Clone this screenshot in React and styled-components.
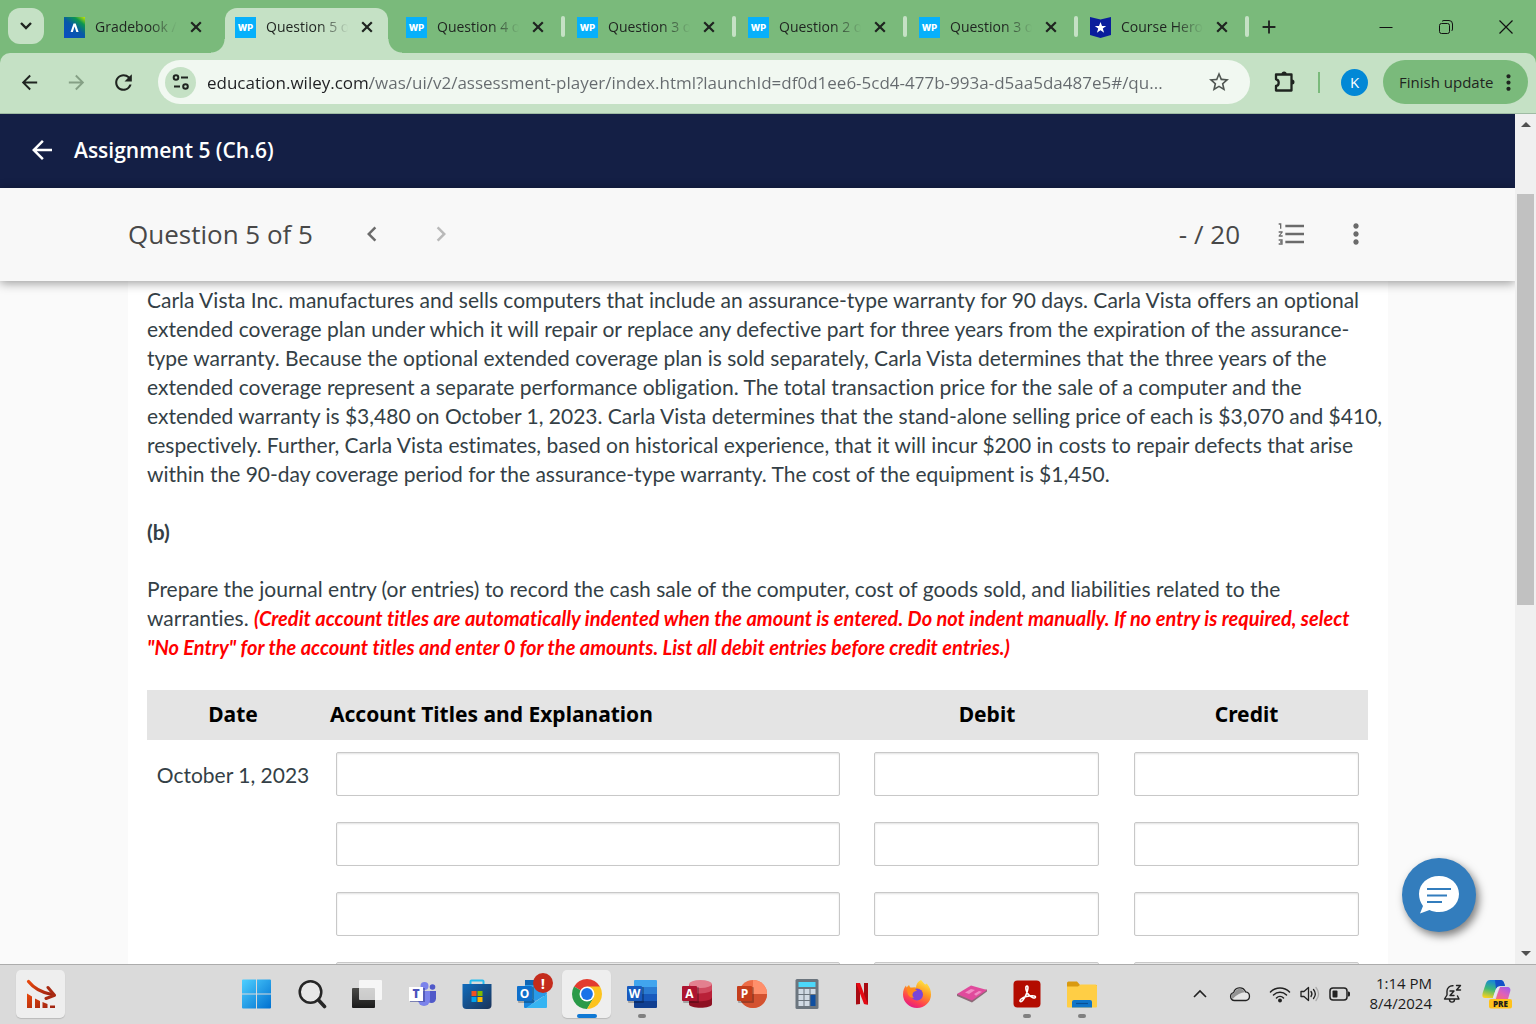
import React from "react";
import styled, { createGlobalStyle, css } from "styled-components";
import {
  MdArrowBack,
  MdArrowForward,
  MdChevronLeft,
  MdChevronRight,
  MdAdd,
  MdMoreVert,
  MdRefresh,
  MdStarBorder,
  MdFormatListNumbered,
} from "react-icons/md";

const green = "#7aba7b";
const mint = "#c5e1c5";
const ink = "#1f2420";
const ui = `"Open Sans", "Noto Sans", sans-serif`;

const GlobalStyle = createGlobalStyle`
  * { box-sizing: border-box; }
  body { margin: 0; overflow: hidden; font-family: ${ui}; }
  button { border: 0; padding: 0; background: none; font: inherit; color: inherit; cursor: pointer; }
  svg { display: block; flex: none; }
`;

const Screen = styled.div`
  display: flex;
  flex-direction: column;
  height: 100vh;
  background: ${green};
`;

/* ---------- tab strip ---------- */

const TabStrip = styled.header`
  display: flex;
  align-items: stretch;
  height: 53px;
  padding: 8px 0 0 8px;
  color: ${ink};
`;

const TabSearch = styled.button`
  display: grid;
  place-items: center;
  width: 36px;
  height: 36px;
  margin-right: 10px;
  border-radius: 12px;
  background: ${mint};
`;

const TabList = styled.ul`
  display: flex;
  margin: 0;
  padding: 0;
  list-style: none;
`;

const TabItem = styled.li`
  display: flex;
  width: 171px;
`;

const foot = css`
  content: "";
  position: absolute;
  bottom: 0;
  width: 14px;
  height: 14px;
`;

const TabBody = styled.div`
  position: relative;
  display: flex;
  align-items: center;
  gap: 10px;
  width: 163px;
  padding: 0 14px 7px 10px;
  border-radius: 12px 12px 0 0;
  background: ${(p) => (p.$active ? mint : "transparent")};
  ${(p) =>
    p.$active &&
    css`
      &::before {
        ${foot}
        left: -14px;
        background: radial-gradient(circle at 0 0, transparent 13px, ${mint} 14px);
      }
      &::after {
        ${foot}
        right: -14px;
        background: radial-gradient(circle at 100% 0, transparent 13px, ${mint} 14px);
      }
    `}
`;

const TabTitle = styled.span`
  flex: 1;
  min-width: 0;
  overflow: hidden;
  white-space: nowrap;
  font-size: 14px;
  line-height: 20px;
  mask-image: linear-gradient(to right, #000 54px, transparent 82px);
`;

const TabClose = styled.button`
  display: grid;
  place-items: center;
  width: 14px;
  height: 20px;
`;

const TabDivider = styled.span`
  width: 4px;
  height: 21px;
  margin: 8px 2px;
  border-radius: 2px;
  background: ${(p) => (p.$shown ? mint : "transparent")};
`;

const NewTab = styled.button`
  display: grid;
  place-items: center;
  width: 36px;
  height: 37px;
`;

const WindowButtons = styled.div`
  display: flex;
  height: 37px;
  margin-left: auto;
`;

const WindowButton = styled.button`
  display: grid;
  place-items: center;
  width: 60px;
`;

/* ---------- toolbar ---------- */

const Toolbar = styled.div`
  display: flex;
  align-items: center;
  height: 61px;
  padding: 0 8px 2px 6px;
  border-radius: 10px 10px 0 0;
  border-bottom: 1px solid #9fbba3;
  background: ${mint};
  color: ${ink};
`;

const ToolButton = styled.button`
  display: grid;
  place-items: center;
  width: 47px;
  height: 44px;
  color: ${(p) => (p.$muted ? "#85a085" : "inherit")};
`;

const Omnibox = styled.div`
  display: flex;
  flex: 1;
  align-items: center;
  min-width: 0;
  height: 44px;
  margin: 0 11px;
  padding: 0 9px 0 7px;
  border-radius: 22px;
  background: #f1f8f1;
`;

const SiteInfo = styled.button`
  display: grid;
  place-items: center;
  flex: none;
  width: 31px;
  height: 31px;
  margin-right: 11px;
  border-radius: 50%;
  background: ${mint};
`;

const Address = styled.input`
  flex: 1;
  min-width: 0;
  height: 32px;
  padding: 0;
  border: 0;
  outline: 0;
  font-family: ${ui};
  font-size: 17px;
  color: #5f6368;
  text-overflow: ellipsis;
  background: linear-gradient(to right, #1f2023 163px, #656a6e 163px);
  background-clip: text;
  -webkit-text-fill-color: transparent;
`;

const StarButton = styled.button`
  display: grid;
  place-items: center;
  width: 44px;
  height: 44px;
  color: #505652;
`;

const ToolDivider = styled.span`
  width: 2px;
  height: 21px;
  margin: 0 21px 0 10px;
  background: ${green};
`;

const Avatar = styled.button`
  width: 27px;
  height: 27px;
  margin-right: 15px;
  border-radius: 50%;
  background: #0288d6;
  color: #fff;
  font-size: 15px;
`;

const UpdateButton = styled.button`
  display: flex;
  align-items: center;
  justify-content: space-between;
  width: 145px;
  height: 44px;
  padding: 0 7px 0 16px;
  border-radius: 22px;
  background: ${green};
  font-size: 15px;
  white-space: nowrap;
`;

/* ---------- web page ---------- */

const Viewport = styled.div`
  display: flex;
  flex: 1;
  min-height: 0;
`;

const Page = styled.div`
  position: relative;
  display: flex;
  flex: 1;
  flex-direction: column;
  min-width: 0;
  overflow: hidden;
  background: #fafafa;
`;

const AssignmentBar = styled.div`
  display: flex;
  flex: none;
  align-items: center;
  gap: 17px;
  height: 74px;
  padding: 0 27px 2px;
  background: #141f45;
  color: #fff;
`;

const AssignmentTitle = styled.h1`
  margin: 0;
  font-size: 21px;
  font-weight: 600;
  line-height: 30px;
`;

const QuestionBar = styled.div`
  position: relative;
  z-index: 1;
  display: flex;
  flex: none;
  align-items: center;
  height: 93px;
  padding: 0 142px 2px 128px;
  background: #f8f8f8;
  color: #484848;
  box-shadow: 0 2px 10px rgba(0, 0, 0, 0.4);
`;

const QuestionTitle = styled.h2`
  margin: 0 42px 0 0;
  font-size: 26px;
  font-weight: 400;
  line-height: 36px;
`;

const BarButton = styled.button`
  display: grid;
  place-items: center;
  width: 34px;
  height: 34px;
  margin-right: ${(p) => p.$gap || 0}px;
  color: ${(p) => (p.$muted ? "#b9b9b9" : "#6b6b6b")};
`;

const Score = styled.span`
  margin: 0 35px 0 auto;
  font-size: 26px;
  line-height: 36px;
`;

const Sheet = styled.main`
  margin: 0 127px 0 128px;
  padding: 4px 5px 0 19px;
  background: #fff;
  color: #343f46;
  font-family: Lato, sans-serif;
  font-size: 21px;
  line-height: 29px;
  font-variant-ligatures: none;
`;

const Paragraph = styled.p`
  margin: 0 0 29px;
`;

const PartLabel = styled.h3`
  margin: 0 0 28px;
  font-size: 21px;
  font-weight: 700;
`;

const Hint = styled.em`
  color: #ff0000;
  font-size: 20px;
  font-weight: 700;
  line-height: 20px;
`;

const JournalArea = styled.section`
  padding-right: 15px;
`;

const Journal = styled.table`
  width: 100%;
  table-layout: fixed;
  border-collapse: collapse;
`;

const Column = styled.col`
  width: ${(p) => p.$width};
`;

const HeadCell = styled.th`
  height: 50px;
  padding: 0 9px 2px ${(p) => (p.$align ? 11 : 9)}px;
  background: #e4e4e4;
  color: #000;
  font-family: "Noto Sans", sans-serif;
  font-size: 21px;
  font-weight: 700;
  text-align: ${(p) => p.$align || "center"};
`;

const Cell = styled.td`
  height: 70px;
  padding: 0 ${(p) => p.$right || 9}px 2px ${(p) => p.$left || 9}px;
  text-align: center;
`;

const Entry = styled.input`
  display: block;
  width: 100%;
  height: 44px;
  padding: 0 10px;
  border: 1px solid #c8c8c8;
  border-radius: 2px;
  background: #fff;
  box-shadow: inset 0 1px 2px rgba(0, 0, 0, 0.12);
  font-family: Lato, sans-serif;
  font-size: 21px;
`;

const ChatButton = styled.button`
  position: absolute;
  right: 39px;
  bottom: 32px;
  z-index: 2;
  display: grid;
  place-items: center;
  width: 74px;
  height: 74px;
  border-radius: 50%;
  background: #337dbd;
  box-shadow: 3px 4px 8px rgba(0, 0, 0, 0.5);
`;

const ScrollRail = styled.div`
  display: flex;
  flex-direction: column;
  width: 21px;
  padding: 0 2px;
  background: #f0f0f0;
`;

const ScrollArrow = styled.button`
  display: grid;
  place-items: center;
  height: 21px;
`;

const ScrollSpace = styled.div`
  flex: ${(p) => p.$share};
`;

const ScrollThumb = styled.div`
  flex: 411;
  background: #c1c1c1;
`;

/* ---------- task bar ---------- */

const TaskBar = styled.footer`
  display: flex;
  flex: none;
  align-items: center;
  height: 60px;
  padding: 0 15px 2px 16px;
  border-top: 1px solid #acacac;
  background: #dadada;
  color: #1c1c1c;
`;

const WidgetTile = styled.button`
  display: grid;
  place-items: center;
  width: 49px;
  height: 48px;
  border-radius: 5px;
  background: #eeeeee;
  box-shadow: 0 1px 1px rgba(0, 0, 0, 0.15);
`;

const AppList = styled.nav`
  display: flex;
  margin-left: 164px;
`;

const AppButton = styled.button`
  position: relative;
  display: grid;
  place-items: center;
  width: 49px;
  height: 48px;
  margin: 0 3px;
  border-radius: 5px;
  background: ${(p) => (p.$state === "active" ? "#eeeeee" : "transparent")};
  box-shadow: ${(p) => (p.$state === "active" ? "0 1px 1px rgba(0, 0, 0, 0.15)" : "none")};

  &::after {
    content: "";
    position: absolute;
    bottom: 0;
    width: ${(p) => (p.$state === "active" ? 20 : 8)}px;
    height: 4px;
    border-radius: 2px;
    background: ${(p) =>
      p.$state === "active" ? "#0f78d4" : p.$state === "open" ? "#808080" : "transparent"};
  }
`;

const AlertBadge = styled.span`
  position: absolute;
  top: 3px;
  right: 3px;
  width: 20px;
  height: 20px;
  border-radius: 50%;
  background: #c42b1c;
  color: #fff;
  font-size: 15px;
  font-weight: 700;
  line-height: 20px;
`;

const Tray = styled.div`
  display: flex;
  align-items: center;
  margin-left: auto;
`;

const TrayButton = styled.button`
  display: grid;
  place-items: center;
  width: ${(p) => p.$width}px;
  height: 40px;
`;

const Clock = styled.button`
  width: 73px;
  padding: 0 1px 2px 0;
  font-size: 15px;
  line-height: 20px;
  text-align: right;
  white-space: nowrap;
`;

/* ---------- drawings ---------- */

const WileyIcon = () => (
  <svg width="21" height="21" viewBox="0 0 21 21">
    <rect width="21" height="21" fill="#06b0fb" />
    <text x="10.5" y="13.500" textAnchor="middle" fontFamily="Inter, sans-serif" fontWeight="800" fontSize="9" fill="#fff">WP</text>
  </svg>
);

const GradebookIcon = () => (
  <svg width="21" height="21" viewBox="0 0 21 21">
    <defs>
      <linearGradient id="gb" x1="0.2" y1="1" x2="1" y2="0">
        <stop offset="0" stopColor="#0a4fc0" />
        <stop offset="0.45" stopColor="#0758a8" />
        <stop offset="0.75" stopColor="#0c9650" />
        <stop offset="1" stopColor="#c8e800" />
      </linearGradient>
    </defs>
    <rect width="21" height="21" fill="url(#gb)" />
    <path d="M6.6 15 9.5 6.5h2.2L14.6 15h-2.3l-1.8-5.6L8.9 15z" fill="#fff" />
  </svg>
);

const HeroIcon = () => (
  <svg width="21" height="21" viewBox="0 0 21 21">
    <path d="M0 0l10.500 2.600L21 0v18l-10.500 3L0 18z" fill="#0a1d9c" />
    <path d="M10.500 5l1.500 4h4.200l-3.400 2.600 1.300 4.200-3.600-2.500-3.600 2.500 1.300-4.200L4.800 9H9z" fill="#fff" />
  </svg>
);

const CrossIcon = () => (
  <svg width="12" height="12" viewBox="0 0 12 12" fill="none" stroke={ink} strokeWidth="2.200">
    <path d="M1.200 1.200l9.600 9.600M10.800 1.200l-9.600 9.600" />
  </svg>
);

const ChevronIcon = () => (
  <svg width="14" height="10" viewBox="0 0 14 10" fill="none" stroke={ink} strokeWidth="2.400">
    <path d="M2 2l5 5 5-5" />
  </svg>
);

const TuneIcon = () => (
  <svg width="18" height="18" viewBox="0 0 18 18" fill="none" stroke={ink} strokeWidth="2">
    <circle cx="4" cy="4.500" r="2.300" />
    <path d="M9 4.500h7M2 13.500h6" />
    <circle cx="13.500" cy="13.500" r="2.300" />
  </svg>
);

const PuzzleIcon = () => (
  <svg width="24" height="24" viewBox="0 0 24 24" fill="none" stroke={ink} strokeWidth="2.300">
    <path d="M3 4.500h15.500v16H3v-4.500c3.600-.4 3.600-6.300 0-6.700z" strokeLinejoin="round" />
    <path d="M8.500 4a2.600 2.600 0 0 1 5.200 0zM19 9.500a2.500 2.500 0 0 1 0 5z" fill={ink} stroke="none" />
  </svg>
);

const StartIcon = () => (
  <svg width="30" height="30" viewBox="0 0 30 30">
    <defs>
      <linearGradient id="st" x1="0" y1="0" x2="1" y2="1">
        <stop offset="0" stopColor="#4fd0ff" />
        <stop offset="1" stopColor="#0070d0" />
      </linearGradient>
    </defs>
    <path d="M1 .5h13v14H0V1.500a1 1 0 0 1 1-1zM15 .5h13a1 1 0 0 1 1 1v13H15zM0 15.500h14v14H1a1 1 0 0 1-1-1zM15 15.500h14v13a1 1 0 0 1-1 1H15z" fill="url(#st)" />
  </svg>
);

const SearchIcon = () => (
  <svg width="30" height="30" viewBox="0 0 30 30" fill="none" stroke="#262626">
    <circle cx="13.500" cy="13" r="10.800" strokeWidth="2.500" fill="#e8e8e8" />
    <path d="M21.500 21l6 6.500" strokeWidth="3.600" strokeLinecap="round" />
  </svg>
);

const TaskViewIcon = () => (
  <svg width="32" height="30" viewBox="0 0 32 30">
    <defs>
      <linearGradient id="tv" x1="0" y1="0" x2="0" y2="1">
        <stop offset="0" stopColor="#4a4a48" />
        <stop offset="1" stopColor="#1a1a1a" />
      </linearGradient>
    </defs>
    <rect x="1" y="9" width="23" height="20" rx="1" fill="url(#tv)" />
    <rect x="8" y="1" width="23" height="20" rx="1" fill="#fff" fillOpacity="0.75" />
  </svg>
);

const TeamsIcon = () => (
  <svg width="30" height="28" viewBox="0 0 30 28">
    <circle cx="17.500" cy="6" r="4" fill="#7b83eb" />
    <circle cx="25.500" cy="7" r="2.800" fill="#5059c9" />
    <path d="M20 11h9v7.500a4.500 4.500 0 0 1-9 0z" fill="#5059c9" />
    <path d="M11 11h12v9a6 6 0 0 1-12 0z" fill="#7b83eb" />
    <rect x="3" y="8" width="15" height="14" fill="#3e4699" opacity="0.6" />
    <rect x="2" y="7" width="14" height="14" fill="#fff" />
    <text x="9" y="18" textAnchor="middle" fontFamily="Open Sans, sans-serif" fontWeight="800" fontSize="12" fill="#4b53bc">T</text>
  </svg>
);

const StoreIcon = () => (
  <svg width="30" height="30" viewBox="0 0 30 30">
    <defs>
      <linearGradient id="ms" x1="0" y1="0" x2="1" y2="1">
        <stop offset="0" stopColor="#0f6cbd" />
        <stop offset="1" stopColor="#1c3358" />
      </linearGradient>
    </defs>
    <path d="M8.500 6V2.500a1 1 0 0 1 1-1h11a1 1 0 0 1 1 1V6" fill="none" stroke="#27bdf0" strokeWidth="2" />
    <path d="M.5 5h29v21a4 4 0 0 1-4 4h-21a4 4 0 0 1-4-4z" fill="url(#ms)" />
    <path d="M9.500 12h5v5h-5z" fill="#f25022" />
    <path d="M15.500 12h5v5h-5z" fill="#7fba00" />
    <path d="M9.500 18h5v5h-5z" fill="#00a4ef" />
    <path d="M15.500 18h5v5h-5z" fill="#ffb900" />
  </svg>
);

const LetterPlate = ({ letter, fill }) => (
  <>
    <rect x="1" y="8" width="16" height="16" rx="1" fill="#000" opacity="0.25" />
    <rect x="0" y="7" width="15" height="15" rx="1" fill={fill} />
    <text x="7.500" y="18.500" textAnchor="middle" fontFamily="Open Sans, sans-serif" fontWeight="700" fontSize="12" fill="#fff">{letter}</text>
  </>
);

const OutlookIcon = () => (
  <svg width="30" height="30" viewBox="0 0 30 30">
    <rect x="8" y="1" width="20" height="16" fill="#1066b5" />
    <path d="M8 6h20l2 9-11 7L7 15z" fill="#2a9be8" />
    <path d="M7 15l12 7-9 7H8a1 1 0 0 1-1-1z" fill="#1a86dd" />
    <path d="M30 15v13a1 1 0 0 1-1 1H9z" fill="#35b4f2" />
    <LetterPlate letter="O" fill="#0f6fca" />
  </svg>
);

const WordIcon = () => (
  <svg width="30" height="30" viewBox="0 0 30 30">
    <path d="M7 2a1 1 0 0 1 1-1h21a1 1 0 0 1 1 1v6H7z" fill="#41a5ee" />
    <path d="M7 8h23v7H7z" fill="#2b7cd3" />
    <path d="M7 15h23v7H7z" fill="#185abd" />
    <path d="M7 22h23v6a1 1 0 0 1-1 1H8a1 1 0 0 1-1-1z" fill="#103f91" />
    <LetterPlate letter="W" fill="#185abd" />
  </svg>
);

const AccessIcon = () => (
  <svg width="30" height="30" viewBox="0 0 30 30">
    <path d="M7 5h23v20c0 5-23 5-23 0z" fill="#8e1022" />
    <path d="M7 5h23v13c0 5-18 5-23 3z" fill="#b92038" />
    <path d="M7 5h23v5c0 5-16 5-23 4z" fill="#d04a60" />
    <ellipse cx="18.500" cy="5" rx="11.500" ry="4" fill="#e3808f" />
    <LetterPlate letter="A" fill="#ad1430" />
  </svg>
);

const PowerPointIcon = () => (
  <svg width="30" height="30" viewBox="0 0 30 30">
    <circle cx="16" cy="15" r="14" fill="#ed6c47" />
    <path d="M16 1a14 14 0 0 1 14 14H16z" fill="#ff8f6b" />
    <path d="M2 15h28a14 14 0 0 1-28 0z" fill="#d35230" />
    <LetterPlate letter="P" fill="#c43e1c" />
  </svg>
);

const ChromeIcon = () => (
  <svg width="30" height="30" viewBox="0 0 30 30">
    <path d="M15 15L2.010 7.500A15 15 0 0 1 27.990 7.500z" fill="#e33b2e" />
    <path d="M15 15L2.010 7.500A15 15 0 0 0 15 30l7.500-12z" fill="#2a9a48" />
    <path d="M15 7.500h12.990A15 15 0 0 1 15 30l6.500-11.250z" fill="#fcc31e" />
    <circle cx="15" cy="15" r="7.500" fill="#fff" />
    <circle cx="15" cy="15" r="5.900" fill="#1a73e8" />
  </svg>
);

const CalculatorIcon = () => (
  <svg width="24" height="30" viewBox="0 0 24 30">
    <rect x="0.500" width="23" height="30" rx="1.500" fill="#6b757e" />
    <rect x="3.500" y="3" width="17" height="5" fill="#4cd8fa" />
    <path d="M3.500 10h5v5h-5zM9.500 10h5v5h-5zM15.500 10h5v5h-5zM3.500 16h5v5h-5zM9.500 16h5v5h-5zM3.500 22h5v5h-5zM9.500 22h5v5h-5z" fill="#d0dae4" />
    <path d="M15.500 16h5v11h-5z" fill="#0f4fa0" />
  </svg>
);

const NetflixIcon = () => (
  <svg width="14" height="22" viewBox="0 0 14 22">
    <path d="M1 0h4v21l-4 .5zM9 0h4v21.500L9 21z" fill="#a80a12" />
    <path d="M1 0h4l8 21.500L9 21z" fill="#e50914" />
  </svg>
);

const FirefoxIcon = () => (
  <svg width="30" height="30" viewBox="0 0 30 30">
    <defs>
      <linearGradient id="ff" x1="0.8" y1="0" x2="0.3" y2="1">
        <stop offset="0" stopColor="#fff04a" />
        <stop offset="0.4" stopColor="#ff9a1f" />
        <stop offset="0.75" stopColor="#ff4050" />
        <stop offset="1" stopColor="#e0188a" />
      </linearGradient>
    </defs>
    <path d="M19 1c1.500 2 3 3 4 4.500 1.500-.5 1.800-1 1.800-1 3 3.500 4.200 7 4.200 11a14 13.500 0 0 1-28 0C1 11 2.500 8 4 6.500l.5 2L7 6l1.500 3c2-1 4-1 5.500-.6 0-3 2-6 5-7.400z" fill="url(#ff)" />
    <circle cx="15" cy="15.500" r="6" fill="#7a45d8" />
    <path d="M5 9c4-1 7 0 10 2.500-2 .5-3 1-4 2.500-1 2-.5 3.500 1 4.500-4 1-7-2-7-9.500z" fill="#ff8a1c" />
  </svg>
);

const PinkTileIcon = () => (
  <svg width="30" height="18" viewBox="0 0 30 18">
    <path d="M0 9v2l15 6.500 15-11v-2z" fill="#8c6a78" />
    <path d="M0 9L14 .5l16 4.500-15 10.500z" fill="#e04a9c" />
    <path d="M8 7.500l6-3.500 4 1-6 4zM17 9l5-3 3 .8-6 4z" fill="#f08cc4" />
  </svg>
);

const AcrobatIcon = () => (
  <svg width="28" height="28" viewBox="0 0 28 28">
    <rect x="0.500" y="0.500" width="27" height="27" rx="4" fill="#b30b00" />
    <path d="M7.500 21.500c-2-1 1.500-4 6-5 4-1 9-1.200 9 .6 0 2-4.500.5-7-2.500-2.500-2.800-3.500-8-1.700-8.500 2.200-.4 1 5-1 9.200-1.600 3.500-4 6.800-5.300 6.200z" fill="none" stroke="#fff" strokeWidth="1.600" />
  </svg>
);

const ExplorerIcon = () => (
  <svg width="30" height="28" viewBox="0 0 30 28">
    <path d="M0 3a1.500 1.500 0 0 1 1.500-1.500H10l3 3.500H30v6H0z" fill="#d99a10" />
    <path d="M0 6.500h11l2.500-2H28.500A1.500 1.500 0 0 1 30 6v20.500a1 1 0 0 1-1 1H1a1 1 0 0 1-1-1z" fill="#ffce45" />
    <path d="M5 27.500V22a2 2 0 0 1 2-2h16a2 2 0 0 1 2 2v5.500z" fill="#0f74c8" />
    <path d="M9 23.500h12" stroke="#084f94" strokeWidth="1.200" />
  </svg>
);

const TrendIcon = () => (
  <svg width="30" height="30" viewBox="0 0 30 30">
    <defs>
      <linearGradient id="tr" x1="0" y1="0" x2="1" y2="1">
        <stop offset="0" stopColor="#e8480c" />
        <stop offset="1" stopColor="#9c2212" />
      </linearGradient>
    </defs>
    <path d="M2.500 2.500C8 9.500 15 13.500 26 15.500" fill="none" stroke="url(#tr)" strokeWidth="3.200" strokeLinecap="round" />
    <path d="M22 8.500l6.500 7.800-8.500 3.200" fill="none" stroke="#a82a12" strokeWidth="3" strokeLinecap="round" strokeLinejoin="round" />
    <path d="M1 14.500l5 3V29H1zM9 19.500l5 2.500v7H9zM16.500 23l5 2V29h-5zM24 26.500h5V29h-5z" fill="url(#tr)" />
  </svg>
);

const CloudIcon = () => (
  <svg width="22" height="16" viewBox="0 0 22 16">
    <path d="M5.500 14.500a4 4 0 0 1-.8-7.900A6.200 6.200 0 0 1 16.500 5.800a4.400 4.400 0 0 1 .4 8.700z" fill="#e6e6e6" stroke="#222" strokeWidth="1.300" />
    <path d="M2.200 11c0-3 1.800-3.700 3.200-3.900C7 1.600 14 1.200 15.800 6.300 12 6.500 8 8.500 3.500 13z" fill="#949494" />
  </svg>
);

const WifiIcon = () => (
  <svg width="22" height="18" viewBox="0 0 22 18" fill="none" stroke="#222" strokeWidth="1.500" strokeLinecap="round">
    <path d="M1.500 7c5.400-5.300 13.600-5.300 19 0M4.500 10c3.700-3.600 9.300-3.600 13 0M7.500 13c2-2 5-2 7 0" />
    <circle cx="11" cy="15.500" r="1.200" fill="#222" />
  </svg>
);

const VolumeIcon = () => (
  <svg width="20" height="16" viewBox="0 0 20 16" fill="none" stroke="#222" strokeWidth="1.300" strokeLinejoin="round" strokeLinecap="round">
    <path d="M1 5.500h3l4.500-4v13l-4.500-4H1z" />
    <path d="M11 5.500c1.200 1.600 1.200 3.400 0 5M13.500 3.500c2.200 2.700 2.200 6.300 0 9" />
    <path d="M16 1.500c3.200 4 3.200 9 0 13" stroke="#aaa" />
  </svg>
);

const BatteryIcon = () => (
  <svg width="22" height="14" viewBox="0 0 22 14">
    <rect x="1" y="1" width="17" height="12" rx="3" fill="none" stroke="#222" strokeWidth="1.500" />
    <rect x="3.500" y="3.500" width="5" height="7" rx="1" fill="#222" />
    <path d="M19 4.500h.5a1.500 1.500 0 0 1 1.500 1.500v2a1.500 1.500 0 0 1-1.500 1.500H19z" fill="#222" />
  </svg>
);

const BellIcon = () => (
  <svg width="20" height="20" viewBox="0 0 20 20" fill="none" stroke="#222" strokeWidth="1.400" strokeLinejoin="round" strokeLinecap="round">
    <path d="M10 1.800C6.500 1.500 4 4 4 7v4l-2.500 4h14.500l-1.500-3M6.500 15.500c0 3.500 5 3.500 5 0M7 7h4l-4 4.500h4M13.500 1.500h4L13.500 6h4" />
  </svg>
);

const CopilotIcon = () => (
  <svg width="32" height="30" viewBox="0 0 32 30">
    <defs>
      <linearGradient id="cl" x1="0.5" y1="0" x2="0.2" y2="1">
        <stop offset="0" stopColor="#1580e0" />
        <stop offset="0.5" stopColor="#3cb878" />
        <stop offset="1" stopColor="#ffd21a" />
      </linearGradient>
      <linearGradient id="cr" x1="1" y1="0" x2="0.3" y2="1">
        <stop offset="0" stopColor="#9a5cf0" />
        <stop offset="0.5" stopColor="#e060b8" />
        <stop offset="1" stopColor="#ff7060" />
      </linearGradient>
    </defs>
    <path d="M9 1h10c3 0 4 2 5 6h-5c-3 0-4 2-5 6l-2 6H4C1 19 1 16 2 13L5 4c1-2 2-3 4-3z" fill="url(#cl)" />
    <path d="M14 1h6c2 0 3 2 4 6h-5c-2 0-3 1-4 3z" fill="#1450c8" />
    <path d="M19 8h7c3 0 4 2 3 5l-2 7c-1 2-2 3-4 3H11c3 0 4-3 5-7z" fill="url(#cr)" />
    <path d="M19 8h-2c-2 1-4 7-5 11h2c2-2 2-8 5-11z" fill="#e8e4f4" />
    <rect x="8" y="20" width="23" height="9.500" rx="2" fill="#ffc21a" />
    <text x="19.500" y="27.500" textAnchor="middle" fontFamily="Open Sans, sans-serif" fontWeight="800" fontSize="8" fill="#1c1c1c">PRE</text>
  </svg>
);

const ChatIcon = () => (
  <svg width="42" height="40" viewBox="0 0 42 40">
    <path d="M21 1c11 0 20 7.500 20 18s-9 18-20 18c-3.500 0-6.500-.6-9.500-2L2 38.500 5 31C2.500 27.500 1 23.500 1 19 1 8.500 10 1 21 1z" fill="#fff" />
    <path d="M9 14h24M9 20.500h20M9 27h15" stroke="#337dbd" strokeWidth="2" />
  </svg>
);

const Triangle = ({ down }) => (
  <svg width="10" height="5" viewBox="0 0 10 5">
    <path d={down ? "M0 0h10L5 5z" : "M0 5h10L5 0z"} fill="#505050" />
  </svg>
);

/* ---------- data ---------- */

const tabs = [
  { title: "Gradebook / ACCT", icon: <GradebookIcon /> },
  { title: "Question 5 of 5", icon: <WileyIcon />, active: true },
  { title: "Question 4 of 5", icon: <WileyIcon />, divider: true },
  { title: "Question 3 of 5", icon: <WileyIcon />, divider: true },
  { title: "Question 2 of 5", icon: <WileyIcon />, divider: true },
  { title: "Question 3 of 5", icon: <WileyIcon />, divider: true },
  { title: "Course Hero", icon: <HeroIcon />, divider: true },
];

const apps = [
  { name: "Start", icon: <StartIcon /> },
  { name: "Search", icon: <SearchIcon /> },
  { name: "Task view", icon: <TaskViewIcon /> },
  { name: "Teams", icon: <TeamsIcon /> },
  { name: "Store", icon: <StoreIcon /> },
  { name: "Outlook", icon: <OutlookIcon />, alert: true },
  { name: "Chrome", icon: <ChromeIcon />, state: "active" },
  { name: "Word", icon: <WordIcon />, state: "open" },
  { name: "Access", icon: <AccessIcon /> },
  { name: "PowerPoint", icon: <PowerPointIcon /> },
  { name: "Calculator", icon: <CalculatorIcon /> },
  { name: "Netflix", icon: <NetflixIcon /> },
  { name: "Firefox", icon: <FirefoxIcon /> },
  { name: "Solitaire", icon: <PinkTileIcon /> },
  { name: "Acrobat", icon: <AcrobatIcon />, state: "open" },
  { name: "File Explorer", icon: <ExplorerIcon />, state: "open" },
];

const rows = ["October 1, 2023", "", "", ""];

export default function App() {
  return (
    <Screen>
      <GlobalStyle />
      <TabStrip>
        <TabSearch aria-label="Search tabs">
          <ChevronIcon />
        </TabSearch>
        <TabList>
          {tabs.map((tab, i) => (
            <TabItem key={i}>
              <TabBody $active={tab.active}>
                {tab.icon}
                <TabTitle>{tab.title}</TabTitle>
                <TabClose aria-label={`Close ${tab.title}`}>
                  <CrossIcon />
                </TabClose>
              </TabBody>
              <TabDivider $shown={tab.divider} />
            </TabItem>
          ))}
        </TabList>
        <NewTab aria-label="New tab">
          <MdAdd size={22} />
        </NewTab>
        <WindowButtons>
          <WindowButton aria-label="Minimize">
            <svg width="14" height="14" viewBox="0 0 14 14" stroke="#111">
              <path d="M0.500 7.500h13" />
            </svg>
          </WindowButton>
          <WindowButton aria-label="Restore">
            <svg width="14" height="14" viewBox="0 0 14 14" fill="none" stroke="#111">
              <rect x="0.500" y="3.500" width="10" height="10" rx="2" />
              <path d="M3 1.500C3.500.8 4 .5 5 .5h5a3.500 3.500 0 0 1 3.500 3.500v5c0 1-.4 1.700-1 2" />
            </svg>
          </WindowButton>
          <WindowButton aria-label="Close window">
            <svg width="14" height="14" viewBox="0 0 14 14" stroke="#111" strokeWidth="1.200">
              <path d="M0.500.5l13 13M13.500.5l-13 13" />
            </svg>
          </WindowButton>
        </WindowButtons>
      </TabStrip>

      <Toolbar>
        <ToolButton aria-label="Back">
          <MdArrowBack size={23} />
        </ToolButton>
        <ToolButton aria-label="Forward" $muted>
          <MdArrowForward size={23} />
        </ToolButton>
        <ToolButton aria-label="Reload">
          <MdRefresh size={25} />
        </ToolButton>
        <Omnibox>
          <SiteInfo aria-label="Site information">
            <TuneIcon />
          </SiteInfo>
          <Address
            type="text"
            aria-label="Address"
            defaultValue="education.wiley.com/was/ui/v2/assessment-player/index.html?launchId=df0d1ee6-5cd4-477b-993a-d5aa5da487e5#/qu..."
          />
          <StarButton aria-label="Bookmark">
            <MdStarBorder size={24} />
          </StarButton>
        </Omnibox>
        <ToolButton aria-label="Extensions">
          <PuzzleIcon />
        </ToolButton>
        <ToolDivider />
        <Avatar>K</Avatar>
        <UpdateButton>
          Finish update
          <MdMoreVert size={25} />
        </UpdateButton>
      </Toolbar>

      <Viewport>
        <Page>
          <AssignmentBar>
            <button aria-label="Back to assignments">
              <MdArrowBack size={30} />
            </button>
            <AssignmentTitle>Assignment 5 (Ch.6)</AssignmentTitle>
          </AssignmentBar>
          <QuestionBar>
            <QuestionTitle>Question 5 of 5</QuestionTitle>
            <BarButton aria-label="Previous question" $gap={35}>
              <MdChevronLeft size={30} />
            </BarButton>
            <BarButton aria-label="Next question" $muted>
              <MdChevronRight size={30} />
            </BarButton>
            <Score>- / 20</Score>
            <BarButton aria-label="Question list" $gap={30}>
              <MdFormatListNumbered size={32} />
            </BarButton>
            <BarButton aria-label="More options">
              <MdMoreVert size={32} />
            </BarButton>
          </QuestionBar>
          <Sheet>
            <Paragraph>
              Carla Vista Inc. manufactures and sells computers that include an assurance-type
              warranty for 90 days. Carla Vista offers an optional extended coverage plan under
              which it will repair or replace any defective part for three years from the
              expiration of the assurance-type warranty. Because the optional extended coverage
              plan is sold separately, Carla Vista determines that the three years of the extended
              coverage represent a separate performance obligation. The total transaction price
              for the sale of a computer and the extended warranty is $3,480 on October 1, 2023.
              Carla Vista determines that the stand-alone selling price of each is $3,070 and
              $410, respectively. Further, Carla Vista estimates, based on historical experience,
              that it will incur $200 in costs to repair defects that arise within the 90-day
              coverage period for the assurance-type warranty. The cost of the equipment is
              $1,450.
            </Paragraph>
            <PartLabel>(b)</PartLabel>
            <Paragraph>
              Prepare the journal entry (or entries) to record the cash sale of the computer, cost
              of goods sold, and liabilities related to the warranties.{" "}
              <Hint>
                (Credit account titles are automatically indented when the amount is entered. Do
                not indent manually. If no entry is required, select "No Entry" for the account
                titles and enter 0 for the amounts. List all debit entries before credit entries.)
              </Hint>
            </Paragraph>
            <JournalArea>
              <Journal>
                <colgroup>
                  <Column $width="172px" />
                  <Column />
                  <Column $width="276px" />
                  <Column $width="243px" />
                </colgroup>
                <thead>
                  <tr>
                    <HeadCell>Date</HeadCell>
                    <HeadCell $align="left">Account Titles and Explanation</HeadCell>
                    <HeadCell>Debit</HeadCell>
                    <HeadCell>Credit</HeadCell>
                  </tr>
                </thead>
                <tbody>
                  {rows.map((date, i) => (
                    <tr key={i}>
                      <Cell>{date}</Cell>
                      <Cell $left={17}>
                        <Entry type="text" aria-label={`Account title, line ${i + 1}`} />
                      </Cell>
                      <Cell $left={25} $right={26}>
                        <Entry type="text" aria-label={`Debit, line ${i + 1}`} />
                      </Cell>
                      <Cell>
                        <Entry type="text" aria-label={`Credit, line ${i + 1}`} />
                      </Cell>
                    </tr>
                  ))}
                </tbody>
              </Journal>
            </JournalArea>
          </Sheet>
          <ChatButton aria-label="Chat">
            <ChatIcon />
          </ChatButton>
        </Page>
        <ScrollRail>
          <ScrollArrow aria-label="Scroll up">
            <Triangle />
          </ScrollArrow>
          <ScrollSpace $share={59} />
          <ScrollThumb />
          <ScrollSpace $share={338} />
          <ScrollArrow aria-label="Scroll down">
            <Triangle down />
          </ScrollArrow>
        </ScrollRail>
      </Viewport>

      <TaskBar>
        <WidgetTile aria-label="Widgets">
          <TrendIcon />
        </WidgetTile>
        <AppList>
          {apps.map((app) => (
            <AppButton key={app.name} aria-label={app.name} $state={app.state}>
              {app.icon}
              {app.alert && <AlertBadge>!</AlertBadge>}
            </AppButton>
          ))}
        </AppList>
        <Tray>
          <TrayButton $width={40} aria-label="Hidden icons">
            <svg width="14" height="9" viewBox="0 0 14 9" fill="none" stroke="#222" strokeWidth="1.600">
              <path d="M1 8l6-6 6 6" />
            </svg>
          </TrayButton>
          <TrayButton $width={40} aria-label="OneDrive">
            <CloudIcon />
          </TrayButton>
          <TrayButton $width={40} aria-label="Network">
            <WifiIcon />
          </TrayButton>
          <TrayButton $width={20} aria-label="Volume">
            <VolumeIcon />
          </TrayButton>
          <TrayButton $width={40} aria-label="Battery">
            <BatteryIcon />
          </TrayButton>
          <Clock>
            1:14 PM
            <br />
            8/4/2024
          </Clock>
          <TrayButton $width={40} aria-label="Notifications">
            <BellIcon />
          </TrayButton>
          <TrayButton $width={48} aria-label="Copilot">
            <CopilotIcon />
          </TrayButton>
        </Tray>
      </TaskBar>
    </Screen>
  );
}
